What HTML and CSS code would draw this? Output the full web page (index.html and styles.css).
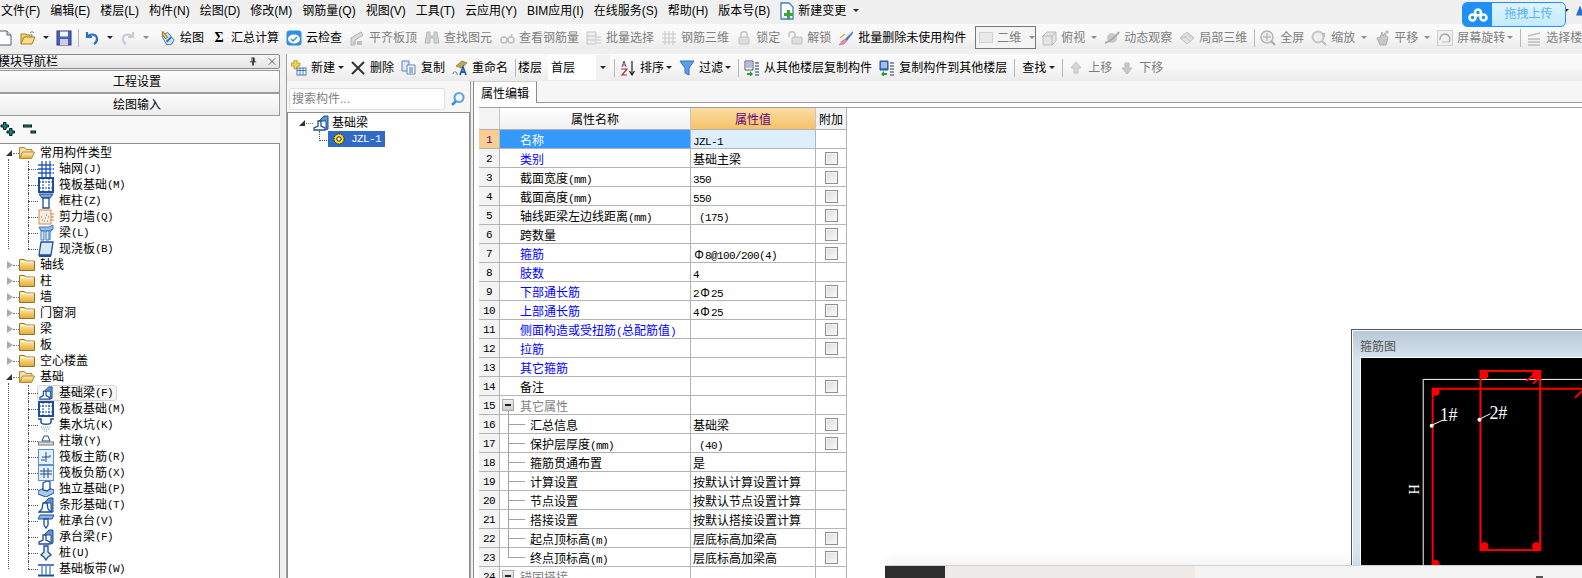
FILE: index.html
```html
<!DOCTYPE html>
<html lang="zh-CN">
<head>
<meta charset="utf-8">
<title>钢筋算量</title>
<link rel="stylesheet" href="styles.css">
</head>
<body>
<svg class="defs" aria-hidden="true">
  <defs>
    <linearGradient id="gf" x1="0" y1="0" x2="0" y2="1"><stop offset="0" stop-color="#fff2b8"/><stop offset="1" stop-color="#e6a92e"/></linearGradient>
    <symbol id="doc" viewBox="0 0 16 16"><path d="M2 1h8l4 4v10H2z" fill="#fff" stroke="#4e5f73"/><path d="M10 1v4h4" fill="#dfe6ee" stroke="#4e5f73"/></symbol>
    <symbol id="open" viewBox="0 0 16 16"><path d="M1 14V4h5l1 1h5v2" fill="#f0d27a" stroke="#a27e2a"/><path d="M1 14l3-7h11l-3 7z" fill="#f7dd8c" stroke="#a27e2a"/><path d="M10 3c2-2 3-1 4 0" fill="none" stroke="#3c78c8"/></symbol>
    <symbol id="save" viewBox="0 0 16 16"><rect x="1" y="1" width="14" height="14" fill="#4b5fb5" stroke="#2c3a80"/><rect x="4" y="1.500" width="8" height="5" fill="#f2f4fb"/><rect x="4" y="9" width="8" height="6" fill="#c9cfe6"/></symbol>
    <symbol id="undo" viewBox="0 0 16 16"><path d="M3 2v5h5M3.500 7C6 3 13 4 13 9c0 2-1 4-3 5" fill="none" stroke="#2f6fc6" stroke-width="2.200"/></symbol>
    <symbol id="redo" viewBox="0 0 16 16"><path d="M13 2v5H8M12.500 7C10 3 3 4 3 9c0 2 1 4 3 5" fill="none" stroke="#c8ced4" stroke-width="2.200"/></symbol>
    <symbol id="draw" viewBox="0 0 17 16"><path d="M2 6l6-4 7 8-3 5H7z" fill="#cfe3f6" stroke="#3b74b5"/><path d="M3 1l5 6-2 2-4-5z" fill="#e7c24d" stroke="#8a6d1e"/><path d="M7 12l5-5" stroke="#2f6fc6" stroke-width="2"/></symbol>
    <symbol id="cloud" viewBox="0 0 16 16"><rect x="0.500" y="0.500" width="15" height="15" rx="3" fill="#2f8fe0"/><ellipse cx="8" cy="9" rx="6" ry="4.500" fill="#fff"/><path d="M5 9l2 2 4-4" fill="none" stroke="#2f8fe0" stroke-width="1.500"/></symbol>
    <symbol id="align" viewBox="0 0 16 16"><path d="M2 8l10-6 2 3-8 5v5H2z" fill="#dcdcdc" stroke="#b0b0b0"/><path d="M4 11h2v4H4zM8 11h5v4H8z" fill="#c0c0c0"/></symbol>
    <symbol id="bino" viewBox="0 0 16 16"><path d="M3 2h3v4h4V2h3l2 11h-5V8H6v5H1z" fill="#d2d2d2" stroke="#b8b8b8"/></symbol>
    <symbol id="glass" viewBox="0 0 16 16"><circle cx="5" cy="10" r="3" fill="none" stroke="#bdbdbd" stroke-width="1.500"/><circle cx="12" cy="10" r="3" fill="none" stroke="#bdbdbd" stroke-width="1.500"/><path d="M8 10h1M12 7l1-3" stroke="#bdbdbd" stroke-width="1.500"/></symbol>
    <symbol id="batch" viewBox="0 0 16 16"><path d="M1 2h9v12H1zM1 6h9M1 10h9" fill="#eee" stroke="#c4c4c4"/><path d="M11 7h4M11 10h4M11 13h4" stroke="#c4c4c4"/></symbol>
    <symbol id="grid3" viewBox="0 0 16 16"><path d="M1 4h14M1 8h14M1 12h14M4 1v14M8 1v14M12 1v14" fill="none" stroke="#c6c6c6"/></symbol>
    <symbol id="lock" viewBox="0 0 16 16"><path d="M5 7V4c0-3 6-3 6 0v3" fill="none" stroke="#c4c4c4" stroke-width="1.500"/><rect x="3" y="7" width="10" height="7" rx="1" fill="#ddd" stroke="#c0c0c0"/></symbol>
    <symbol id="unlock" viewBox="0 0 16 16"><path d="M2 7V4c0-3 6-3 6 0v3" fill="none" stroke="#c4c4c4" stroke-width="1.500"/><rect x="5" y="7" width="10" height="7" rx="1" fill="#ddd" stroke="#c0c0c0"/></symbol>
    <symbol id="brush" viewBox="0 0 16 16"><path d="M15 1L7 9l2 2 6-8z" fill="#4a78c8"/><path d="M7 9l-3 2-3 4 5-1 3-3z" fill="#e98bb0" stroke="#b0608a" stroke-width=".5"/><path d="M2 8l5-4" stroke="#d8a83c" stroke-width="1.500"/></symbol>
    <symbol id="cube" viewBox="0 0 16 16"><path d="M2 6l4-4h9v9l-4 4H2z" fill="#e4e4e4" stroke="#bcbcbc"/><path d="M2 6h9v9M11 6l4-4" fill="none" stroke="#bcbcbc"/></symbol>
    <symbol id="orbit" viewBox="0 0 16 16"><circle cx="8" cy="8" r="5" fill="#c9c9c9"/><path d="M1 13C5 12 12 7 15 2" fill="none" stroke="#aaa" stroke-width="2"/></symbol>
    <symbol id="local" viewBox="0 0 16 16"><path d="M1 8l7-6 7 6-7 6z" fill="#e2e2e2" stroke="#bcbcbc"/><path d="M4 5l7 6M8 2l4 6M1 8l7-1" stroke="#c6c6c6" fill="none"/></symbol>
    <symbol id="full" viewBox="0 0 16 16"><circle cx="7" cy="7" r="6" fill="#eee" stroke="#b5b5b5" stroke-width="1.500"/><path d="M11 11l4 4" stroke="#a8a8a8" stroke-width="2"/><path d="M7 3v8M3 7h8" stroke="#a8a8a8"/></symbol>
    <symbol id="zoomi" viewBox="0 0 16 16"><circle cx="7" cy="7" r="5.500" fill="#f0f0f0" stroke="#c6c6c6" stroke-width="2"/><path d="M11 11l4 4M13 3v4" stroke="#bbb" stroke-width="2"/></symbol>
    <symbol id="pan" viewBox="0 0 16 16"><path d="M3 8l3 7h6l2-8-2-1-1-3-2 3-1-4-2 6-1-1z" fill="#c8c8c8" stroke="#adadad"/><path d="M13 0v4M11 2h4" stroke="#aaa"/></symbol>
    <symbol id="rot" viewBox="0 0 16 16"><rect x="0.500" y="0.500" width="15" height="15" fill="#f0f0f0" stroke="#d0d0d0"/><path d="M3 10a5 5 0 1 1 9 2" fill="none" stroke="#a8a8a8" stroke-width="1.500"/><path d="M5 12h7" stroke="#b4c8a0"/></symbol>
    <symbol id="layer" viewBox="0 0 16 16"><path d="M2 6l12-3M2 9h12M2 12h12M2 15h12" stroke="#bcbcbc" stroke-width="1.500"/></symbol>
    <symbol id="new" viewBox="0 0 16 16"><path d="M3 0h3v3h3v3H6v3H3V6H0V3h3z" fill="#f3d24d" stroke="#a88a20" stroke-width=".7"/><rect x="6" y="8" width="9" height="7" fill="#fff" stroke="#4a78b0"/><path d="M6 10.500h9M9 8v7M12 8v7" stroke="#4a78b0"/></symbol>
    <symbol id="del" viewBox="0 0 16 16"><path d="M2 2l12 12M14 2L2 14" stroke="#333" stroke-width="2"/></symbol>
    <symbol id="copy" viewBox="0 0 16 16"><path d="M1 1h7v10H1z" fill="#dfe9f7" stroke="#5a82b8"/><path d="M6 5h8v9H6z" fill="#fff" stroke="#5a82b8"/><path d="M8 8h4M8 10h4M8 12h4" stroke="#3a68a8"/></symbol>
    <symbol id="ren" viewBox="0 0 16 16"><path d="M4 6l6-5 5 2-6 5z" fill="#c9a94f" stroke="#7c6a2a" stroke-width=".7"/><path d="M8 15l3-8 3 8M9.500 12h3" fill="none" stroke="#2a5ca8" stroke-width="1.800"/><path d="M1 14c0-3 4-3 4 0v1" fill="none" stroke="#777"/></symbol>
    <symbol id="sort" viewBox="0 0 16 16"><path d="M2 7l2-6 2 6M3 5h2" fill="none" stroke="#7a3a8a"/><path d="M1 9h6L2 15h5" fill="none" stroke="#a8322a" stroke-width="1.200"/><path d="M12 1v13M9.500 11l2.500 4 2.500-4" fill="none" stroke="#222" stroke-width="1.200"/></symbol>
    <symbol id="filter" viewBox="0 0 16 16"><path d="M1 1h14L10 8v7l-4-2V8z" fill="#5aa0e6" stroke="#2f6fc6"/></symbol>
    <symbol id="from" viewBox="0 0 16 16"><path d="M1 1h8v9H1z" fill="#fff" stroke="#555"/><path d="M2 3h6M2 5h6M2 7h6" stroke="#5a7fb8"/><path d="M3 13h3v-2l3 3-3 3v-2H3z" fill="#2a9a3a"/><path d="M11 3h4M11 6h4M11 9h4M11 12h4M11 15h4" stroke="#5a7a9a" stroke-width="1.400"/></symbol>
    <symbol id="to" viewBox="0 0 16 16"><path d="M1 1h8v9H1z" fill="#3f7fd0" stroke="#2a4f90"/><path d="M2 3h6M2 5h6M2 7h6" stroke="#fff"/><path d="M8 13H5v-2l-3 3 3 3v-2h3z" fill="#2a9a3a"/><path d="M11 3h4M11 6h4M11 9h4M11 12h4M11 15h4" stroke="#6a7a8a" stroke-width="1.400"/></symbol>
    <symbol id="up" viewBox="0 0 16 16"><path d="M8 2l5 6h-3v5H6V8H3z" fill="#d8d8d8" stroke="#c0c0c0"/></symbol>
    <symbol id="down" viewBox="0 0 16 16"><path d="M8 14l5-6h-3V3H6v5H3z" fill="#c8c8c8" stroke="#bbb"/></symbol>
    <symbol id="pin" viewBox="0 0 10 10"><path d="M3 0h4v5h2v1H6v4H4V6H1V5h2z" fill="#222"/><path d="M4 1v4" stroke="#fff"/></symbol>
    <symbol id="close" viewBox="0 0 10 10"><path d="M1 1l8 8M9 1L1 9" stroke="#444"/></symbol>
    <symbol id="search" viewBox="0 0 16 16"><circle cx="9" cy="6.500" r="4.500" fill="none" stroke="#5aa9e6" stroke-width="2.200"/><path d="M6 10l-4 4" stroke="#3f90d8" stroke-width="2.500"/></symbol>
    <symbol id="expand" viewBox="0 0 16 16"><path d="M3.500 2.500h2.500v2.500h2.500v2H6v2.500H3.500V7H1V5h2.500z" fill="#0d8a8a" stroke="#061c1c"/><path d="M9.500 8.500H12v2.500h2.500v2H12v2.500H9.500V13H7v-2h2.500z" fill="#0d8a8a" stroke="#061c1c"/></symbol>
    <symbol id="collapse" viewBox="0 0 16 16"><rect x="3.500" y="5" width="8" height="2" fill="#0d8a8a" stroke="#061c1c"/><rect x="11" y="11" width="4.500" height="2" fill="#0d8a8a" stroke="#061c1c"/></symbol>
    <symbol id="fopen" viewBox="0 0 16 16"><path d="M0.500 13V2.500h5l1.500 2h6V7" fill="#f1dfa4" stroke="#a8893e"/><path d="M0.500 13.500l3-6.500h12l-3 6.500z" fill="url(#gf)" stroke="#a8893e"/></symbol>
    <symbol id="fclosed" viewBox="0 0 16 16"><path d="M0.500 13.500v-11h5l1 1.500h9v9.500z" fill="url(#gf)" stroke="#8e7430"/><path d="M1.500 5h13" stroke="#fff6cf"/></symbol>
    <symbol id="t-grid" viewBox="0 0 16 16"><path d="M4 0v16M8 0v16M12 0v16M0 4h16M0 8h16M0 12h16" stroke="#2458bc" stroke-width="1.300" fill="none"/><path d="M14 3v2M14 7v2M14 11v2" stroke="#fff"/></symbol>
    <symbol id="t-raft" viewBox="0 0 16 16"><rect x="1" y="1" width="14" height="14" fill="#fff" stroke="#1c4f96" stroke-width="2"/><path d="M5 1v14M11 1v14M1 5h14M1 11h14" stroke="#1c4f96" stroke-dasharray="2 1"/></symbol>
    <symbol id="t-col" viewBox="0 0 16 16"><path d="M1 1h14l-3 4H4z" fill="#74a7e0" stroke="#1c4f96"/><path d="M5 5h6v10H5z" fill="#fff" stroke="#1c4f96" stroke-width="1.300"/></symbol>
    <symbol id="t-wall" viewBox="0 0 16 16"><rect x="1" y="1" width="12" height="14" fill="#f6ece2" stroke="#d88a4a"/><path d="M4 11h1M7 9h1M6 12h1M9 12h1M10 8h1M8 6h1M3 8h1" stroke="#777"/><path d="M13 5h3M13 8h3M13 11h3" stroke="#e07a20"/></symbol>
    <symbol id="t-beam" viewBox="0 0 16 16"><path d="M1 2l10 0 4-2v4l-4 2H3z" fill="#8ec0ee" stroke="#3a78c0"/><path d="M3 6h3v9H3zM11 6h-3v9h3zM15 4l-3 3v8" fill="#dcecfa" stroke="#3a78c0"/></symbol>
    <symbol id="t-slab" viewBox="0 0 16 16"><path d="M3 1h12l-2 13H1z" fill="#d8e8fa" stroke="#1c4f96" stroke-width="1.300"/><path d="M1 15h12" stroke="#1c4f96" stroke-width="2"/></symbol>
    <symbol id="t-fb" viewBox="0 0 16 16"><path d="M6 6l5-5h4v13l-2 1V6z" fill="#5f93d2" stroke="#1c4f96"/><path d="M5 6h3v5l4 2v2H1v-2l4-2z" fill="#fff" stroke="#1c4f96" stroke-width="1.300"/></symbol>
    <symbol id="t-sump" viewBox="0 0 16 16"><path d="M0 2h3v3c0 3 10 3 10 0V2h3" fill="none" stroke="#1c4f96" stroke-width="1.500"/><path d="M3 10h10M4 12h8M6 14h4" stroke="#6a9ad6" stroke-dasharray="1 1"/></symbol>
    <symbol id="t-pier" viewBox="0 0 16 16"><path d="M6 3h4l2 5H4z" fill="#fff" stroke="#1c4f96"/><rect x="0.500" y="9" width="15" height="3" fill="#ddd" stroke="#777"/></symbol>
    <symbol id="t-rm" viewBox="0 0 16 16"><rect x="0.500" y="0.500" width="15" height="15" fill="#e4f0fb" stroke="#5b8fd0"/><path d="M8 3v10M4 8h8V6M3 11h4" fill="none" stroke="#1c4f96"/></symbol>
    <symbol id="t-rn" viewBox="0 0 16 16"><rect x="0.500" y="0.500" width="15" height="15" fill="#e4f0fb" stroke="#5b8fd0"/><path d="M2 6h12M2 9h12M6 3v10M10 3v10" stroke="#1c4f96"/></symbol>
    <symbol id="t-iso" viewBox="0 0 16 16"><path d="M0 10l8-4 8 3v3l-8 4-8-3z" fill="#a8c8ee" stroke="#1c4f96"/><path d="M5 2l4-2 3 1v7l-3 2-4-1z" fill="#fff" stroke="#1c4f96" stroke-width="1.300"/></symbol>
    <symbol id="t-strip" viewBox="0 0 16 16"><path d="M6 6l5-5h4v14h-2V6z" fill="#5f93d2" stroke="#1c4f96"/><path d="M5 6h4l1 6 3 3H1l3-3z" fill="#fff" stroke="#1c4f96" stroke-width="1.300"/></symbol>
    <symbol id="t-cap" viewBox="0 0 16 16"><path d="M2 2h14l-2 4H0z" fill="#8ab6e6" stroke="#1c4f96"/><path d="M6 6h4v6l-2 3-2-3z" fill="#fff" stroke="#1c4f96" stroke-width="1.300"/></symbol>
    <symbol id="t-pile" viewBox="0 0 16 16"><path d="M6 1h4v6l3 3-3 2-2 3-2-3-3-2 3-3z" fill="#dcecfa" stroke="#1c4f96" stroke-width="1.300"/></symbol>
    <symbol id="t-band" viewBox="0 0 16 16"><path d="M0 4h16" stroke="#1c4f96" stroke-width="1.500"/><path d="M0 14.500h16" stroke="#1c4f96" stroke-width="2"/><path d="M4 4v10M12 4v10M8 4v10" stroke="#5b8fd0" stroke-width="1.500"/></symbol>
    <symbol id="gear" viewBox="0 0 12 12"><circle cx="6" cy="6" r="5" fill="#ffe800" stroke="#111" stroke-dasharray="1.500 1"/><circle cx="6" cy="6" r="2.200" fill="#fff" stroke="#111"/></symbol>
    <symbol id="file" viewBox="0 0 14 18"><path d="M1 1h8l4 4v12H1z" fill="#fff" stroke="#3f7fc0" stroke-width="1.300"/><path d="M7 8h3v3h3v3h-3v3H7v-3H4v-3h3z" fill="#3aa53a"/></symbol>
  </defs>
</svg>

<div class="app">
  <nav class="menu">
    <span>文件(F)</span><span>编辑(E)</span><span>楼层(L)</span><span>构件(N)</span><span>绘图(D)</span><span>修改(M)</span><span>钢筋量(Q)</span><span>视图(V)</span><span>工具(T)</span><span>云应用(Y)</span><span>BIM应用(I)</span><span>在线服务(S)</span><span>帮助(H)</span><span>版本号(B)</span>
    <span class="menu-change"><svg class="file-i"><use href="#file"/></svg>新建变更<i class="caret dark wide"></i></span>
    <span class="menu-end"><i class="caret dark"></i><i class="blue-bit"></i></span>
  </nav>

  <div class="bar bar-top">
    <svg class="i first"><use href="#doc"/></svg>
    <svg class="i m7"><use href="#open"/></svg>
    <i class="caret dark m7"></i>
    <svg class="i m6"><use href="#save"/></svg>
    <i class="sep"></i>
    <svg class="i m7"><use href="#undo"/></svg>
    <i class="caret dark m7"></i>
    <svg class="i m7"><use href="#redo"/></svg>
    <i class="caret m11"></i>
    <span class="t"><svg class="i"><use href="#draw"/></svg>绘图</span>
    <span class="t"><b class="sigma">Σ</b>汇总计算</span>
    <span class="t"><svg class="i"><use href="#cloud"/></svg>云检查</span>
    <span class="t off"><svg class="i"><use href="#align"/></svg>平齐板顶</span>
    <span class="t off"><svg class="i"><use href="#bino"/></svg>查找图元</span>
    <span class="t off"><svg class="i"><use href="#glass"/></svg>查看钢筋量</span>
    <span class="t off"><svg class="i"><use href="#batch"/></svg>批量选择</span>
    <span class="t off"><svg class="i"><use href="#grid3"/></svg>钢筋三维</span>
    <span class="t off"><svg class="i"><use href="#lock"/></svg>锁定</span>
    <span class="t off"><svg class="i"><use href="#unlock"/></svg>解锁</span>
    <span class="t"><svg class="i"><use href="#brush"/></svg>批量删除未使用构件</span>
    <span class="view-combo"><i class="swatch"></i>二维<i class="caret"></i></span>
    <span class="t off near"><svg class="i"><use href="#cube"/></svg>俯视</span><i class="caret after-text"></i>
    <span class="t off"><svg class="i"><use href="#orbit"/></svg>动态观察</span>
    <span class="t off"><svg class="i"><use href="#local"/></svg>局部三维</span>
    <i class="sep"></i>
    <span class="t off"><svg class="i"><use href="#full"/></svg>全屏</span>
    <span class="t off near"><svg class="i"><use href="#zoomi"/></svg>缩放</span><i class="caret after-text"></i>
    <span class="t off near"><svg class="i"><use href="#pan"/></svg>平移</span><i class="caret after-text"></i>
    <span class="t off near"><svg class="i"><use href="#rot"/></svg>屏幕旋转</span><i class="caret after-close"></i>
    <i class="sep"></i>
    <span class="t off"><svg class="i"><use href="#layer"/></svg>选择楼层</span>
  </div>

  <div class="main">
    <aside class="nav">
      <div class="nav-inner">
        <div class="nav-title"><span>模块导航栏</span><svg class="ti"><use href="#pin"/></svg><svg class="ti"><use href="#close"/></svg></div>
        <div class="nav-btn">工程设置</div>
        <div class="nav-btn">绘图输入</div>
        <div class="nav-tools"><svg class="i"><use href="#expand"/></svg><svg class="i"><use href="#collapse"/></svg></div>
        <div class="nav-tree">
          <div class="group open">
            <div class="r"><i class="arr-open"></i><svg class="i"><use href="#fopen"/></svg>常用构件类型</div>
            <ul class="kids">
              <li><svg class="i"><use href="#t-grid"/></svg>轴网<span class="m">(J)</span></li>
              <li><svg class="i"><use href="#t-raft"/></svg>筏板基础<span class="m">(M)</span></li>
              <li><svg class="i"><use href="#t-col"/></svg>框柱<span class="m">(Z)</span></li>
              <li><svg class="i"><use href="#t-wall"/></svg>剪力墙<span class="m">(Q)</span></li>
              <li><svg class="i"><use href="#t-beam"/></svg>梁<span class="m">(L)</span></li>
              <li><svg class="i"><use href="#t-slab"/></svg>现浇板<span class="m">(B)</span></li>
            </ul>
          </div>
          <div class="r"><i class="arr-closed"></i><svg class="i"><use href="#fclosed"/></svg>轴线</div>
          <div class="r"><i class="arr-closed"></i><svg class="i"><use href="#fclosed"/></svg>柱</div>
          <div class="r"><i class="arr-closed"></i><svg class="i"><use href="#fclosed"/></svg>墙</div>
          <div class="r"><i class="arr-closed"></i><svg class="i"><use href="#fclosed"/></svg>门窗洞</div>
          <div class="r"><i class="arr-closed"></i><svg class="i"><use href="#fclosed"/></svg>梁</div>
          <div class="r"><i class="arr-closed"></i><svg class="i"><use href="#fclosed"/></svg>板</div>
          <div class="r"><i class="arr-closed"></i><svg class="i"><use href="#fclosed"/></svg>空心楼盖</div>
          <div class="group open">
            <div class="r"><i class="arr-open"></i><svg class="i"><use href="#fopen"/></svg>基础</div>
            <ul class="kids">
              <li><span class="hot-box"><svg class="i"><use href="#t-fb"/></svg>基础梁<span class="m">(F)</span></span></li>
              <li><svg class="i"><use href="#t-raft"/></svg>筏板基础<span class="m">(M)</span></li>
              <li><svg class="i"><use href="#t-sump"/></svg>集水坑<span class="m">(K)</span></li>
              <li><svg class="i"><use href="#t-pier"/></svg>柱墩<span class="m">(Y)</span></li>
              <li><svg class="i"><use href="#t-rm"/></svg>筏板主筋<span class="m">(R)</span></li>
              <li><svg class="i"><use href="#t-rn"/></svg>筏板负筋<span class="m">(X)</span></li>
              <li><svg class="i"><use href="#t-iso"/></svg>独立基础<span class="m">(P)</span></li>
              <li><svg class="i"><use href="#t-strip"/></svg>条形基础<span class="m">(T)</span></li>
              <li><svg class="i"><use href="#t-cap"/></svg>桩承台<span class="m">(V)</span></li>
              <li><svg class="i"><use href="#t-fb"/></svg>承台梁<span class="m">(F)</span></li>
              <li><svg class="i"><use href="#t-pile"/></svg>桩<span class="m">(U)</span></li>
              <li><svg class="i"><use href="#t-band"/></svg>基础板带<span class="m">(W)</span></li>
            </ul>
          </div>
        </div>
      </div>
    </aside>

    <div class="work">
      <div class="bar bar-second">
        <span class="t near"><svg class="i"><use href="#new"/></svg>新建</span><i class="caret dark tight"></i>
        <span class="t"><svg class="i"><use href="#del"/></svg>删除</span>
        <span class="t"><svg class="i"><use href="#copy"/></svg>复制</span>
        <span class="t"><svg class="i"><use href="#ren"/></svg>重命名</span>
        <i class="sep s2"></i>
        <span class="floor-label">楼层</span>
        <span class="floor-combo">首层<i class="caret dark"></i></span>
        <i class="sep s5"></i>
        <span class="t near"><svg class="i"><use href="#sort"/></svg>排序</span><i class="caret dark after-close"></i>
        <span class="t near"><svg class="i"><use href="#filter"/></svg>过滤</span><i class="caret dark after-close"></i>
        <i class="sep"></i>
        <span class="t"><svg class="i"><use href="#from"/></svg>从其他楼层复制构件</span>
        <span class="t"><svg class="i"><use href="#to"/></svg>复制构件到其他楼层</span>
        <i class="sep s7"></i>
        <span class="near">查找</span><i class="caret dark tight m7"></i>
        <i class="sep"></i>
        <span class="t off"><svg class="i"><use href="#up"/></svg>上移</span>
        <span class="t off"><svg class="i"><use href="#down"/></svg>下移</span>
      </div>

      <div class="panes">
        <section class="comp">
          <div class="search"><span class="search-box">搜索构件...</span><svg class="search-i"><use href="#search"/></svg></div>
          <div class="comp-tree">
            <div class="comp-root"><i class="arr-open"></i><svg class="i"><use href="#t-fb"/></svg>基础梁</div>
            <div class="comp-item"><span class="comp-sel"><svg class="gear"><use href="#gear"/></svg><span class="m">JZL-1</span></span></div>
          </div>
        </section>
        <div class="split"></div>
        <section class="props">
          <div class="tabs"><span class="tab">属性编辑</span></div>
          <div class="grid-wrap">
            <table class="grid">
              <colgroup><col class="c0"><col class="c1"><col class="c2"><col class="c3"></colgroup>
              <thead>
                <tr><th class="hn"></th><th>属性名称</th><th class="hv">属性值</th><th class="ha">附加</th></tr>
              </thead>
              <tbody>
                <tr class="cur"><td class="n">1</td><td class="k">名称</td><td class="v"><span class="m">JZL-1</span></td><td></td></tr>
                <tr><td class="n">2</td><td class="k link">类别</td><td class="v">基础主梁</td><td class="c"><input type="checkbox" class="cb"></td></tr>
                <tr><td class="n">3</td><td class="k">截面宽度<span class="m">(mm)</span></td><td class="v"><span class="m">350</span></td><td class="c"><input type="checkbox" class="cb"></td></tr>
                <tr><td class="n">4</td><td class="k">截面高度<span class="m">(mm)</span></td><td class="v"><span class="m">550</span></td><td class="c"><input type="checkbox" class="cb"></td></tr>
                <tr><td class="n">5</td><td class="k">轴线距梁左边线距离<span class="m">(mm)</span></td><td class="v"><span class="m"> (175)</span></td><td class="c"><input type="checkbox" class="cb"></td></tr>
                <tr><td class="n">6</td><td class="k">跨数量</td><td class="v"></td><td class="c"><input type="checkbox" class="cb"></td></tr>
                <tr><td class="n">7</td><td class="k link">箍筋</td><td class="v"><span class="bar-sym">Φ</span><span class="m">8@100/200(4)</span></td><td class="c"><input type="checkbox" class="cb"></td></tr>
                <tr><td class="n">8</td><td class="k link">肢数</td><td class="v"><span class="m">4</span></td><td></td></tr>
                <tr><td class="n">9</td><td class="k link">下部通长筋</td><td class="v"><span class="m">2</span><span class="bar-sym">Φ</span><span class="m">25</span></td><td class="c"><input type="checkbox" class="cb"></td></tr>
                <tr><td class="n">10</td><td class="k link">上部通长筋</td><td class="v"><span class="m">4</span><span class="bar-sym">Φ</span><span class="m">25</span></td><td class="c"><input type="checkbox" class="cb"></td></tr>
                <tr><td class="n">11</td><td class="k link">侧面构造或受扭筋<span class="m">(</span>总配筋值<span class="m">)</span></td><td class="v"></td><td class="c"><input type="checkbox" class="cb"></td></tr>
                <tr><td class="n">12</td><td class="k link">拉筋</td><td class="v"></td><td class="c"><input type="checkbox" class="cb"></td></tr>
                <tr><td class="n">13</td><td class="k link">其它箍筋</td><td class="v"></td><td></td></tr>
                <tr><td class="n">14</td><td class="k">备注</td><td class="v"></td><td class="c"><input type="checkbox" class="cb"></td></tr>
                <tr><td class="n">15</td><td class="k grp grp-first"><i class="minus"></i>其它属性</td><td class="v"></td><td></td></tr>
                <tr><td class="n">16</td><td class="k sub">汇总信息</td><td class="v">基础梁</td><td class="c"><input type="checkbox" class="cb"></td></tr>
                <tr><td class="n">17</td><td class="k sub">保护层厚度<span class="m">(mm)</span></td><td class="v"><span class="m"> (40)</span></td><td class="c"><input type="checkbox" class="cb"></td></tr>
                <tr><td class="n">18</td><td class="k sub">箍筋贯通布置</td><td class="v">是</td><td></td></tr>
                <tr><td class="n">19</td><td class="k sub">计算设置</td><td class="v">按默认计算设置计算</td><td></td></tr>
                <tr><td class="n">20</td><td class="k sub">节点设置</td><td class="v">按默认节点设置计算</td><td></td></tr>
                <tr><td class="n">21</td><td class="k sub">搭接设置</td><td class="v">按默认搭接设置计算</td><td></td></tr>
                <tr><td class="n">22</td><td class="k sub">起点顶标高<span class="m">(m)</span></td><td class="v">层底标高加梁高</td><td class="c"><input type="checkbox" class="cb"></td></tr>
                <tr><td class="n">23</td><td class="k sub sub-last">终点顶标高<span class="m">(m)</span></td><td class="v">层底标高加梁高</td><td class="c"><input type="checkbox" class="cb"></td></tr>
                <tr><td class="n">24</td><td class="k grp"><i class="minus"></i>锚固搭接</td><td class="v"></td><td></td></tr>
              </tbody>
            </table>
          </div>
        </section>
      </div>
    </div>
  </div>

  <div class="stirrup">
    <div class="stirrup-title">箍筋图</div>
    <svg class="stirrup-canvas" viewBox="1360 358 222 220" preserveAspectRatio="xMinYMin slice">
      <rect x="1360" y="358" width="222" height="220" fill="#000"/>
      <path d="M1422.500 578V379.500H1582" fill="none" stroke="#fff"/>
      <path d="M1432 578V389H1582" fill="none" stroke="#f00" stroke-width="2"/>
      <rect x="1480" y="371" width="60" height="180" fill="none" stroke="#f00" stroke-width="2"/>
      <g fill="#f00">
        <circle cx="1484" cy="375" r="4"/><circle cx="1536" cy="375" r="4.500"/><circle cx="1484" cy="547" r="4"/><circle cx="1536" cy="547" r="4"/><circle cx="1435" cy="392" r="4"/><circle cx="1435" cy="565" r="4"/>
      </g>
      <path d="M1537 372l-11 9M1540 376l-7 8M1582 391l-7 7" fill="none" stroke="#f00" stroke-width="2"/>
      <path d="M1430 426l12-5.500M1478 420l12-6" stroke="#fff"/>
      <circle cx="1431" cy="426" r="2" fill="#fff"/><circle cx="1479" cy="420" r="2" fill="#fff"/>
      <text class="cad" x="1439" y="421">1#</text>
      <text class="cad" x="1489" y="419">2#</text>
      <text class="cad-h" transform="translate(1408 490) rotate(90)" text-anchor="middle">H</text>
    </svg>
  </div>

  <div class="taskbar"><i class="tb-dark"></i><i class="tb-warm"></i><i class="tb-clip"></i></div>

  <div class="upload">
    <span class="upload-logo"><svg viewBox="0 0 20 14" class="upload-svg"><g fill="none" stroke="#fff" stroke-width="2.600"><circle cx="10" cy="4.500" r="3"/><circle cx="4.500" cy="9.500" r="3"/><circle cx="15.500" cy="9.500" r="3"/></g></svg></span>
    <span class="upload-text">拖拽上传</span>
  </div>
</div>
</body>
</html>
```
FILE: styles.css
```css
* { box-sizing: border-box; }
html, body { margin: 0; padding: 0; }
body {
  width: 1582px; height: 578px; overflow: hidden; background: #fff; color: #000;
  font: 12px/16px "Liberation Sans", "Noto Sans CJK SC", sans-serif;
}
.defs { position: absolute; width: 0; height: 0; }
.app { position: relative; width: 1582px; height: 578px; overflow: hidden; background: #f0f0f0; }
i { display: block; font-style: normal; }
svg { display: block; flex: none; }
.i { width: 16px; height: 16px; }
.m { font: 11px/12px "Liberation Mono", monospace; letter-spacing: -.6px; white-space: pre; }

/* menu */
.menu { display: flex; align-items: center; gap: 10px; height: 24px; padding: 0 0 3px 1px; white-space: nowrap; }
.menu-change { display: flex; align-items: center; }
.file-i { width: 14px; height: 18px; margin-right: 4px; }
.menu-end { display: flex; align-items: center; gap: 7px; margin-left: auto; }
.blue-bit { width: 8px; height: 10px; margin-right: -2px; background: #1e6fd8; clip-path: polygon(50% 0, 100% 100%, 0 100%); }

/* toolbars */
.bar { display: flex; align-items: center; white-space: nowrap; background: linear-gradient(#fbfbfb, #f7f7f7 50%, #ebebeb); }
.bar-top { height: 25px; padding-top: 2px; overflow: hidden; }
.bar-second { height: 27px; padding-left: 4px; overflow: hidden; }
.t { display: flex; align-items: center; gap: 4px; margin-right: 7px; flex: none; }
.t.near { margin-right: 0; }
.off { color: #7e7e7e; }
.first { margin-left: -3px; margin-right: 7px; }
.m6 { margin-right: 6px; } .m7 { margin-right: 7px; } .m11 { margin-right: 11px; }
.sep { width: 1px; height: 18px; background: #b8b8b8; margin-right: 5px; flex: none; }
.s2 { margin-right: 2px; } .s5 { margin-left: 4px; margin-right: 5px; } .s7 { margin-right: 7px; }
.caret { width: 0; height: 0; border: 3px solid transparent; border-top: 3px solid #8c8c8c; border-bottom: 0; flex: none; }
.caret.dark { border-top-color: #222; }
.caret.wide { margin-left: 7px; }
.caret.after-text { margin-left: 6px; margin-right: 7px; }
.caret.after-close { margin-left: 2px; margin-right: 7px; }
.caret.tight { margin-left: 3px; margin-right: 6px; }
.caret.m7.tight { margin-right: 7px; }
.sigma { width: 16px; text-align: center; font: bold 14px/16px "Liberation Serif", serif; }
.view-combo { display: flex; align-items: center; width: 61px; height: 23px; margin-left: 2px; margin-right: 5px; padding-left: 3px; border: 1px solid #777; background: #f4f4f4; color: #7e7e7e; flex: none; }
.swatch { width: 14px; height: 11px; margin-right: 4px; background: #e8e8e8; border: 1px solid #d0d0d0; }
.view-combo .caret { margin-left: 8px; }

/* main */
.main { display: flex; height: 529px; margin-top: 5px; }
.nav { width: 287px; border-right: 1px solid #a0a0a0; background: #f0f0f0; flex: none; overflow: hidden; }
.nav-inner { width: 280px; height: 100%; display: flex; flex-direction: column; }
.nav-title { display: flex; align-items: center; height: 15px; margin-left: -4px; padding-right: 3px; border: 1px solid #8a8a8a; border-radius: 2px; background: linear-gradient(#f6f6f6, #e4e4e4); flex: none; }
.nav-title span { flex: 1; padding: 1px 0 0 1px; line-height: 13px; }
.ti { width: 8px; height: 9px; margin-left: 11px; }
.nav-btn { height: 23px; margin: 1px 0 -1px -6px; width: 286px; padding-top: 2px; line-height: 18px; text-align: center; border: 1px solid #9c9c9c; background: linear-gradient(#fdfdfd, #ececec); flex: none; }
.nav-tools { display: flex; align-items: center; gap: 4px; height: 27px; margin-top: 1px; padding-bottom: 3px; background: #f8f8f8; flex: none; }
.nav-tree { flex: 1; padding-top: 1px; background: #fff; border-top: 1px solid #8c8c8c; border-right: 1px solid #8c8c8c; overflow: hidden; }

/* tree */
.r, .kids li, .comp-root { line-height: 17px; }
.r { display: flex; align-items: flex-start; gap: 5px; height: 16px; padding-left: 19px; position: relative; }
.r .i, .kids .i, .comp-root .i { align-self: center; }
.r .arr-open, .r .arr-closed { position: absolute; left: 6px; top: 5px; }
.r::after { content: ""; position: absolute; left: 13px; top: 8px; width: 6px; border-top: 1px dotted #777; }
.arr-open { width: 0; height: 0; border-left: 6px solid transparent; border-bottom: 6px solid #333; }
.arr-closed { width: 6px; height: 8px; top: 4px !important; left: 7px !important; background: #fff; clip-path: polygon(0 0, 100% 50%, 0 100%); box-shadow: inset 0 0 0 4px #aaa; }
.group { position: relative; }
.group::before { content: ""; position: absolute; left: 8px; top: 14px; bottom: 8px; border-left: 1px dotted #555; }
.kids { list-style: none; margin: 0 0 0 28px; padding: 0; }
.kids li { display: flex; align-items: flex-start; height: 16px; padding-left: 10px; position: relative; white-space: nowrap; }
.kids .i { margin-right: 5px; }
.kids .m { line-height: 17px; }
.kids li::before { content: ""; position: absolute; left: 0; top: 8px; width: 10px; border-top: 1px dotted #555; }
.kids li::after { content: ""; position: absolute; left: 0; top: 0; bottom: 0; border-left: 1px dotted #555; }
.kids li:last-child::after { bottom: 8px; }
.hot-box { display: flex; align-items: flex-start; width: 80px; height: 16px; margin-left: -1px; border: 1px solid #d4d4d4; border-radius: 3px; background: #f5f5f5; line-height: 15px; }
.hot-box .i { height: 14px; }
.kids .hot-box .m { line-height: 15px; }

/* work area */
.work { flex: 1; min-width: 0; display: flex; flex-direction: column; }
.floor-label { flex: none; margin-right: 6px; }
.floor-combo { display: flex; align-items: center; justify-content: space-between; width: 62px; height: 25px; padding: 0 4px 0 3px; background: linear-gradient(to right, #fff 48px, #f2f2f2 48px); flex: none; }
.panes { flex: 1; min-height: 0; display: flex; background: #fff; }
.comp { width: 183px; display: flex; flex-direction: column; flex: none; background: #f6f6f6; }
.search { display: flex; align-items: flex-start; height: 31px; padding: 7px 0 0 2px; flex: none; }
.search-box { width: 156px; height: 22px; padding-left: 2px; line-height: 20px; color: #808080; background: #fff; border: 1px solid #e0e0e0; border-radius: 2px; }
.search-i { width: 16px; height: 16px; margin: 3px 0 0 5px; }
.comp-tree { flex: 1; padding-top: 2px; background: #fff; border: 1px solid #8c8c8c; border-width: 1px 1px 0; }
.comp-root { display: flex; align-items: flex-start; gap: 3px; height: 16px; padding-left: 25px; position: relative; }
.comp-root .arr-open { position: absolute; left: 11px; top: 5px; }
.comp-root::after { content: ""; position: absolute; left: 18px; top: 8px; width: 7px; border-top: 1px dotted #777; }
.comp-item { height: 16px; padding-left: 40px; position: relative; }
.comp-item::before { content: ""; position: absolute; left: 31px; top: 0; height: 9px; width: 9px; border-left: 1px dotted #555; border-bottom: 1px dotted #555; }
.comp-sel { display: flex; align-items: center; width: 57px; height: 16px; padding-left: 5px; color: #fff; background: #316ac5; }
.gear { width: 12px; height: 12px; margin-right: 6px; }
.split { width: 4px; background: #f0f0f0; border-left: 1px solid #a0a0a0; border-right: 1px solid #8c8c8c; flex: none; }
.props { flex: 1; min-width: 0; }
.tabs { height: 22px; border-bottom: 1px solid #9a9a9a; display: flex; background: #f6f6f6; }
.tab { width: 63px; height: 22px; padding: 4px 0 0 7px; background: #fff; border-right: 1px solid #8c8c8c; border-top: 1px solid #d0d0d0; }
.grid-wrap { margin: 4px 0 0 5px; border-top: 1px solid #a0a0a0; }

/* grid */
.grid { width: 368px; table-layout: fixed; border-collapse: separate; border-spacing: 0; }
.c0 { width: 21px; } .c1 { width: 191px; } .c2 { width: 125px; } .c3 { width: 31px; }
.grid th { height: 22px; padding: 2px 0 0; font-weight: 400; background: linear-gradient(#fff, #f0f0f0); border-right: 1px solid #c4c4c4; border-bottom: 1px solid #b0b0b0; }
.grid th.hv { color: #660080; background: linear-gradient(#fbdca4, #f5c266); }
.grid th.hn, .grid th.ha { background: #f3f3f3; }
.grid th.ha { border-right: 1px solid #b0b0b0; }
.grid tr { height: 19px; }
.grid td { height: 19px; padding: 0; line-height: 14px; border-right: 1px solid #b4b4b4; border-bottom: 1px solid #b4b4b4; white-space: nowrap; overflow: hidden; }
.grid td.n { padding-top: 2px; text-align: center; background: #f3f3f3; font: 11px/14px "Liberation Mono", monospace; letter-spacing: -.6px; }
.grid td.k { padding: 3px 0 0 20px; }
.grid td.v { padding: 3px 0 0 2px; }
.grid td.c { text-align: center; }
.link { color: #0000ff; }
.cur td.n { background: #f8cf92; color: #660080; }
.cur td.k { background: #3399ff; color: #fff; }
.cur td.v { background: #ddeeff; }
.bar-sym { display: inline-block; width: 12px; line-height: 12px; text-align: center; }
.cb { appearance: none; display: block; width: 13px; height: 13px; margin: 0 auto; border: 1px solid #8f8f8f; background: linear-gradient(135deg, #dcdcdc, #fafafa); box-shadow: inset 0 0 0 1px #f4f4f4; }
.grp { color: #808080; position: relative; }
.minus { position: absolute; left: 2px; top: 3px; width: 12px; height: 12px; background: linear-gradient(#eee, #ccc); border: 1px solid #aaa; }
.minus::after { content: ""; position: absolute; left: 2px; top: 4px; width: 6px; height: 2px; background: #222; }
.grp-first::after { content: ""; position: absolute; left: 8px; top: 15px; bottom: 0; border-left: 1px solid #a0a0a0; }
.grid td.sub { padding-left: 30px; position: relative; }
.sub::before { content: ""; position: absolute; left: 8px; top: 0; bottom: 0; border-left: 1px solid #a0a0a0; }
.sub::after { content: ""; position: absolute; left: 8px; top: 9px; width: 17px; border-top: 1px solid #a0a0a0; }
.sub-last::before { bottom: 9px; }

/* floating stirrup window */
.stirrup { position: absolute; left: 1351px; top: 329px; width: 240px; height: 260px; padding-left: 8px; background: linear-gradient(#b8c8d6, #d8e4f1 12%, #d8e4f1); border: 1px solid #555; box-shadow: inset 1px 1px 0 #fff; }
.stirrup-title { height: 27px; padding-top: 9px; color: #555; line-height: 16px; }
.stirrup-canvas { width: 222px; height: 220px; border-top: 1px solid #fff; border-left: 1px solid #fff; overflow: hidden; }
.cad { font: 18px "Liberation Serif", serif; fill: #fff; }
.cad-h { font: 14px "Liberation Serif", serif; fill: #fff; }

/* bottom bar */
.taskbar { position: absolute; left: 885px; right: 0; bottom: 0; height: 13px; display: flex; background: #f3f3f3; border-top: 1px solid #d2d2d2; box-shadow: 0 -6px 12px rgba(0,0,0,.05); }
.tb-dark { width: 60px; background: #2d2d2d; }
.tb-warm { width: 250px; background: #eeebe8; }
.tb-clip { width: 7px; height: 2px; margin-left: 341px; align-self: flex-end; background: #555; }

/* upload pill */
.upload { position: absolute; left: 1462px; top: 2px; width: 104px; height: 25px; display: flex; border: 1px solid #1e90ff; border-radius: 5px; overflow: hidden; background: linear-gradient(#dff3ff, #c4ebff); }
.upload-logo { width: 29px; background: #1e8ff5; display: flex; align-items: center; justify-content: center; flex: none; }
.upload-svg { width: 20px; height: 14px; }
.upload-text { flex: 1; text-align: center; line-height: 23px; color: #58b2ee; }
```
